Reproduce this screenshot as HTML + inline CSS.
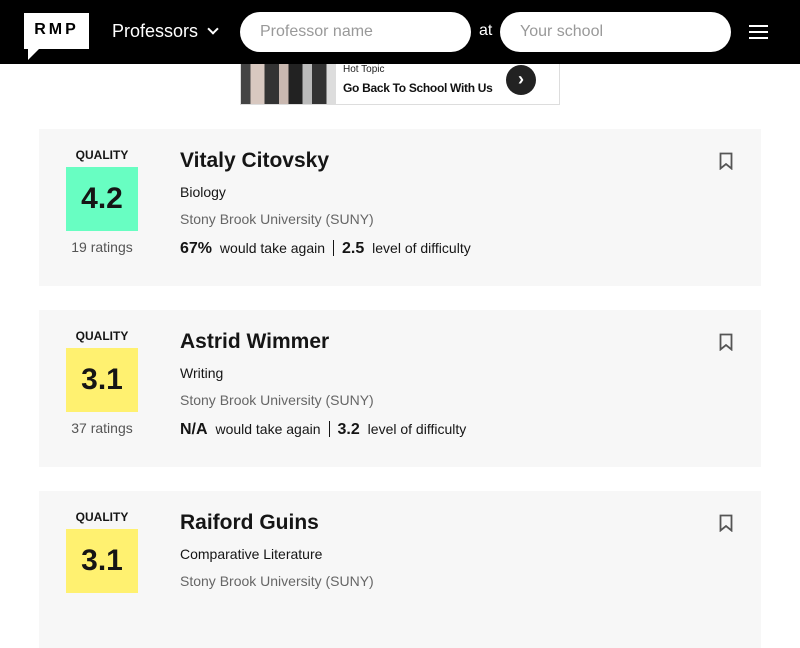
<!DOCTYPE html>
<html><head><style>
*{margin:0;padding:0;box-sizing:border-box}
body{width:800px;height:600px;overflow:hidden;background:#fff;font-family:"Liberation Sans",sans-serif;position:relative}
.hdr{position:absolute;left:0;top:0;width:800px;height:64px;background:#000}
.logo{position:absolute;left:24px;top:13px;width:65px;height:36px;background:#fff;font-weight:bold;font-size:16px;letter-spacing:3px;text-align:center;line-height:34px;color:#000}
.logo:after{content:"";position:absolute;left:4px;bottom:-11px;border-left:0 solid transparent;border-right:12px solid transparent;border-top:12px solid #fff}
.prof{position:absolute;left:112px;top:21px;color:#fff;font-size:18px}
.chev{position:absolute;left:209px;top:25px;width:8px;height:8px;border-right:2px solid #fff;border-bottom:2px solid #fff;transform:rotate(45deg)}
.inp{position:absolute;top:12px;height:40px;background:#fff;border-radius:20px;color:#999;font-size:16px;line-height:40px;padding-left:20px}
.at{position:absolute;left:479px;top:22px;color:#fff;font-size:16px}
.ham{position:absolute;left:749px;width:19px;height:2px;background:#fff}
.ad{position:absolute;left:240px;top:64px;width:320px;height:41px;border:1px solid #ddd;border-top:none;background:#fff}
.card{position:absolute;left:39px;width:722px;height:157px;background:#f7f7f7}
.q{position:absolute;left:27px;top:19px;width:72px;text-align:center;font-size:12px;font-weight:bold;color:#151515}
.box{position:absolute;left:27px;top:38px;width:72px;height:64px;font-size:30px;font-weight:900;line-height:64px;text-align:center;color:#151515}
.rt{position:absolute;left:17px;top:110px;width:92px;text-align:center;font-size:14px;color:#555}
.nm{position:absolute;left:141px;top:20px;font-size:21px;font-weight:900;color:#151515}
.dp{position:absolute;left:141px;top:55px;font-size:14px;color:#151515}
.sc{position:absolute;left:141px;top:82px;font-size:14px;color:#666}
.st{position:absolute;left:141px;top:111px;font-size:14px;color:#151515;white-space:nowrap}
.st b{font-size:16px;font-weight:900;margin-right:4px}
.st i{display:inline-block;width:1px;height:16px;background:#151515;vertical-align:-3px;margin:0 8px}
.bm{position:absolute;left:680px;top:23px}
</style></head><body>
<div class="hdr">
<div class="logo">RMP</div>
<div class="prof">Professors</div><div class="chev"></div>
<div class="inp" style="left:240px;width:231px">Professor name</div>
<div class="at">at</div>
<div class="inp" style="left:500px;width:231px">Your school</div>
<div class="ham" style="top:25px"></div><div class="ham" style="top:31px"></div><div class="ham" style="top:37px"></div>
</div>
<div class="ad">
<div style="position:absolute;left:0;top:0;width:95px;height:40px;background:linear-gradient(90deg,#444 0 10%,#d8c8c0 10% 25%,#333 25% 40%,#c9b8b0 40% 50%,#222 50% 65%,#bbb 65% 75%,#333 75% 90%,#ddd 90%)"></div>
<div style="position:absolute;left:102px;top:0;font-size:10px;color:#222">Hot Topic</div>
<div style="position:absolute;left:102px;top:17px;font-size:12px;font-weight:bold;color:#111;letter-spacing:-.3px">Go Back To School With Us</div>
<div style="position:absolute;left:265px;top:1px;width:30px;height:30px;border-radius:50%;background:#222;color:#fff;font-size:18px;text-align:center;line-height:29px;font-weight:bold">›</div>
</div>

<div class="card" style="top:129px">
<div class="q">QUALITY</div><div class="box" style="background:#68fec2">4.2</div><div class="rt">19 ratings</div>
<div class="nm">Vitaly Citovsky</div><div class="dp">Biology</div><div class="sc">Stony Brook University (SUNY)</div>
<div class="st"><b>67%</b> would take again<i></i><b>2.5</b> level of difficulty</div>
<svg class="bm" width="14" height="18" viewBox="0 0 14 18"><path d="M1.5 1.5h11v15l-5.5-4.5-5.5 4.5z" fill="none" stroke="#555" stroke-width="1.8"/></svg>
</div>
<div class="card" style="top:310px">
<div class="q">QUALITY</div><div class="box" style="background:#fff170">3.1</div><div class="rt">37 ratings</div>
<div class="nm">Astrid Wimmer</div><div class="dp">Writing</div><div class="sc">Stony Brook University (SUNY)</div>
<div class="st"><b>N/A</b> would take again<i></i><b>3.2</b> level of difficulty</div>
<svg class="bm" width="14" height="18" viewBox="0 0 14 18"><path d="M1.5 1.5h11v15l-5.5-4.5-5.5 4.5z" fill="none" stroke="#555" stroke-width="1.8"/></svg>
</div>
<div class="card" style="top:491px">
<div class="q">QUALITY</div><div class="box" style="background:#fff170">3.1</div>
<div class="nm">Raiford Guins</div><div class="dp">Comparative Literature</div><div class="sc">Stony Brook University (SUNY)</div>
<svg class="bm" width="14" height="18" viewBox="0 0 14 18"><path d="M1.5 1.5h11v15l-5.5-4.5-5.5 4.5z" fill="none" stroke="#555" stroke-width="1.8"/></svg>
</div>
</body></html>
